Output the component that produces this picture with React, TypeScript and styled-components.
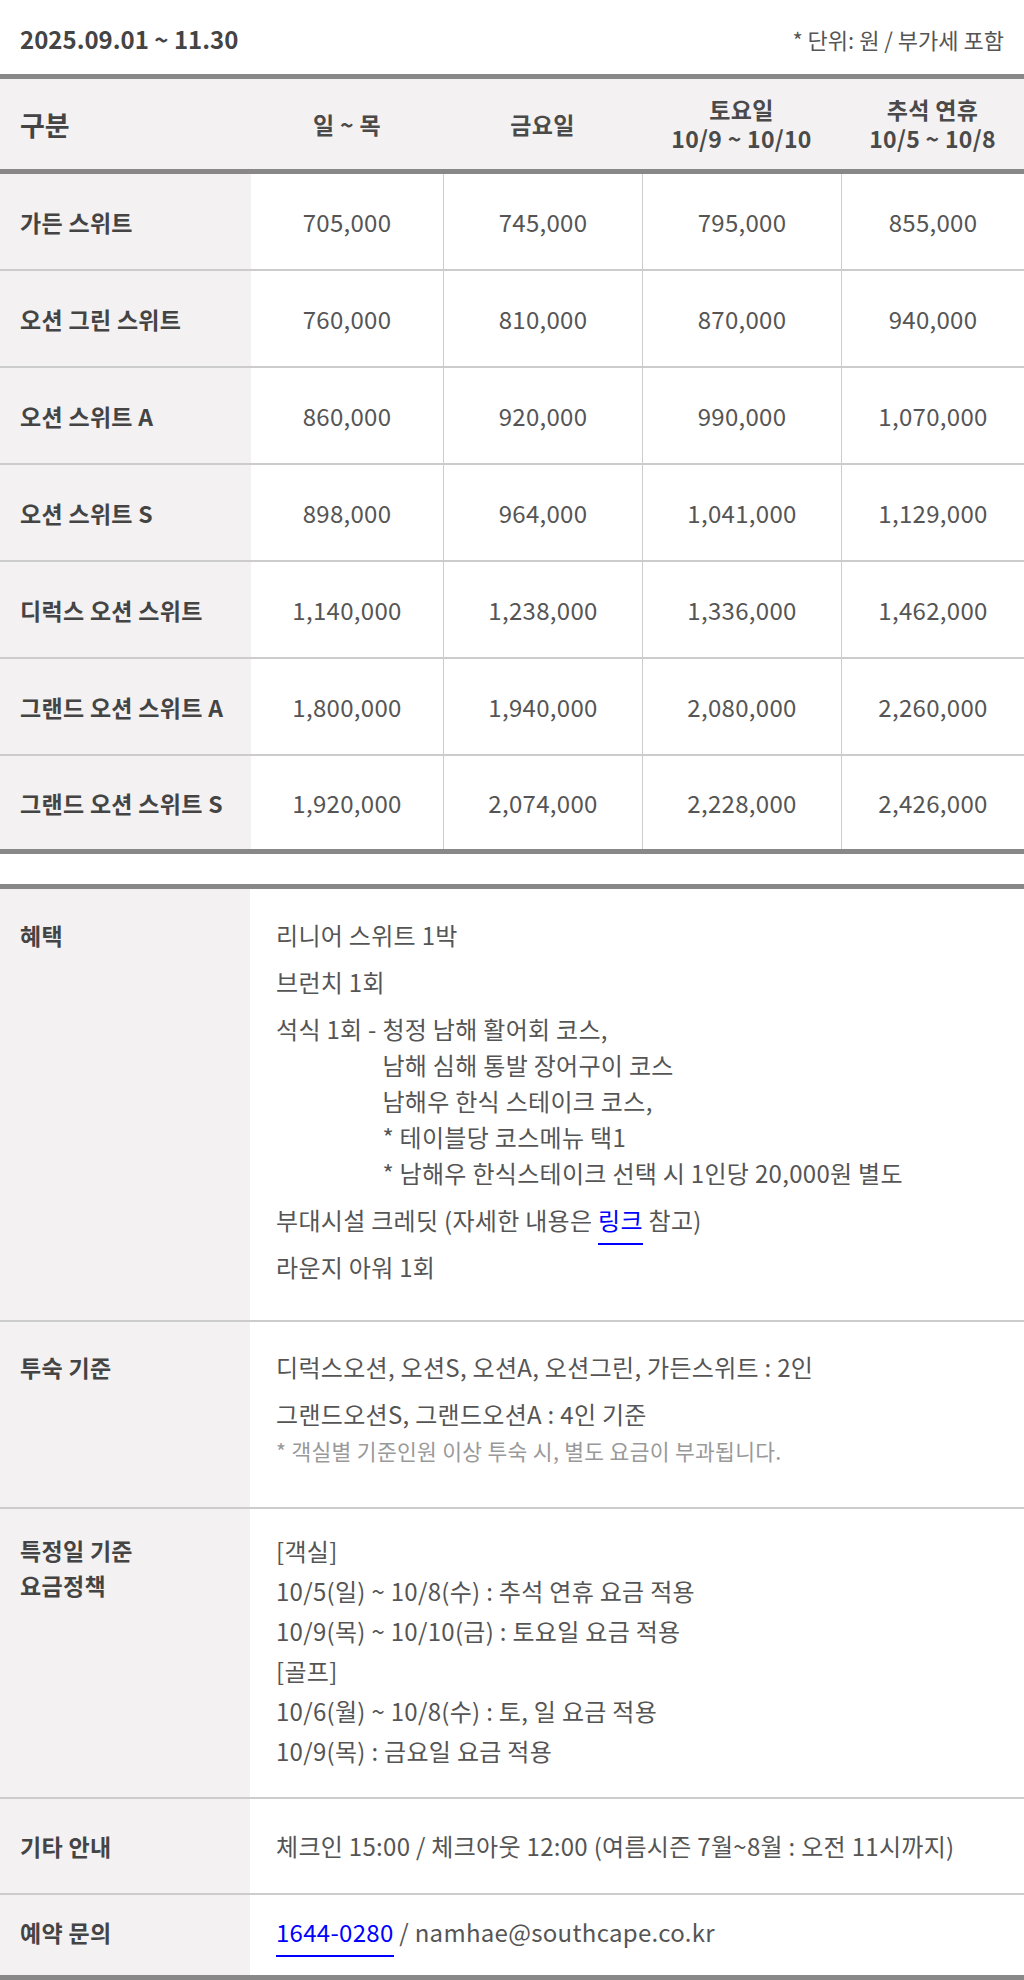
import styled, { createGlobalStyle } from 'styled-components';

const GlobalStyle = createGlobalStyle`
  body {
    margin: 0;
    background: #fff;
    font-family: 'Noto Sans CJK KR', 'Noto Sans', sans-serif;
    color: #555;
  }
  * {
    box-sizing: border-box;
  }
`;

const rooms = [
  ['가든 스위트', '705,000', '745,000', '795,000', '855,000'],
  ['오션 그린 스위트', '760,000', '810,000', '870,000', '940,000'],
  ['오션 스위트 A', '860,000', '920,000', '990,000', '1,070,000'],
  ['오션 스위트 S', '898,000', '964,000', '1,041,000', '1,129,000'],
  ['디럭스 오션 스위트', '1,140,000', '1,238,000', '1,336,000', '1,462,000'],
  ['그랜드 오션 스위트 A', '1,800,000', '1,940,000', '2,080,000', '2,260,000'],
  ['그랜드 오션 스위트 S', '1,920,000', '2,074,000', '2,228,000', '2,426,000'],
];

const App = () => {
  return (
    <Wrapper>
      <GlobalStyle />
      <TopBar>
        <Period>2025.09.01 ~ 11.30</Period>
        <Unit>* 단위: 원 / 부가세 포함</Unit>
      </TopBar>

      <PriceTable>
        <HeadRow>
          <HeadLabel>구분</HeadLabel>
          <HeadCell>일 ~ 목</HeadCell>
          <HeadCell>금요일</HeadCell>
          <HeadCell>
            <span>토요일</span>
            <span>10/9 ~ 10/10</span>
          </HeadCell>
          <HeadCell>
            <span>추석 연휴</span>
            <span>10/5 ~ 10/8</span>
          </HeadCell>
        </HeadRow>
        {rooms.map(([name, ...prices]) => (
          <PriceRow key={name}>
            <RoomName>{name}</RoomName>
            {prices.map((price, i) => (
              <Price key={i} $divider={i > 0}>
                {price}
              </Price>
            ))}
          </PriceRow>
        ))}
      </PriceTable>

      <InfoTable>
        <InfoRow $pt={28} $pb={35}>
          <InfoLabel>혜택</InfoLabel>
          <InfoBody $gap={11}>
            <Line>리니어 스위트 1박</Line>
            <Line>브런치 1회</Line>
            <Course>
              <CoursePrefix>석식 1회 - </CoursePrefix>
              <CourseList>
                <Line>청정 남해 활어회 코스,</Line>
                <Line>남해 심해 통발 장어구이 코스</Line>
                <Line>남해우 한식 스테이크 코스,</Line>
                <Line>* 테이블당 코스메뉴 택1</Line>
                <Line>* 남해우 한식스테이크 선택 시 1인당 20,000원 별도</Line>
              </CourseList>
            </Course>
            <Line>
              부대시설 크레딧 (자세한 내용은 <Link href="#">링크</Link> 참고)
            </Line>
            <Line>라운지 아워 1회</Line>
          </InfoBody>
        </InfoRow>

        <InfoRow $pt={27} $pb={37}>
          <InfoLabel>투숙 기준</InfoLabel>
          <InfoBody $gap={11}>
            <Line>디럭스오션, 오션S, 오션A, 오션그린, 가든스위트 : 2인</Line>
            <div>
              <Line>그랜드오션S, 그랜드오션A : 4인 기준</Line>
              <Note>* 객실별 기준인원 이상 투숙 시, 별도 요금이 부과됩니다.</Note>
            </div>
          </InfoBody>
        </InfoRow>

        <InfoRow $pt={22} $pb={26}>
          <InfoLabel $lh={35} $shift={2}>
            특정일 기준
            <br />
            요금정책
          </InfoLabel>
          <InfoBody $lh={40}>
            <Line>[객실]</Line>
            <Line>10/5(일) ~ 10/8(수) : 추석 연휴 요금 적용</Line>
            <Line>10/9(목) ~ 10/10(금) : 토요일 요금 적용</Line>
            <Line>[골프]</Line>
            <Line>10/6(월) ~ 10/8(수) : 토, 일 요금 적용</Line>
            <Line>10/9(목) : 금요일 요금 적용</Line>
          </InfoBody>
        </InfoRow>

        <InfoRow $pt={29} $pb={29}>
          <InfoLabel>기타 안내</InfoLabel>
          <InfoBody>
            <Line>체크인 15:00 / 체크아웃 12:00 (여름시즌 7월~8월 : 오전 11시까지)</Line>
          </InfoBody>
        </InfoRow>

        <InfoRow $pt={19} $pb={25}>
          <InfoLabel>예약 문의</InfoLabel>
          <InfoBody>
            <Line>
              <Link href="#">1644-0280</Link> / namhae@southcape.co.kr
            </Line>
          </InfoBody>
        </InfoRow>
      </InfoTable>
    </Wrapper>
  );
};

const Wrapper = styled.div`
  width: 1024px;
  background: #fff;
`;

const TopBar = styled.div`
  display: flex;
  justify-content: space-between;
  align-items: center;
  height: 74px;
  padding: 3px 20px 0 20px;
`;

const Period = styled.div`
  font-size: 24px;
  font-weight: 700;
  color: #444;
  line-height: 32px;
`;

const Unit = styled.div`
  font-size: 22px;
  color: #555;
  line-height: 32px;
`;

const PriceTable = styled.div`
  border-top: 5px solid #888;
  border-bottom: 5px solid #888;
`;

const columns = '251px 192px 199px 199px 1fr';

const HeadRow = styled.div`
  display: grid;
  grid-template-columns: ${columns};
  height: 90px;
  background: #f3f1f2;
  border-bottom: 5px solid #888;
  box-sizing: content-box;
`;

const HeadLabel = styled.div`
  display: flex;
  align-items: center;
  padding-left: 20px;
  font-size: 27px;
  font-weight: 700;
  color: #444;
`;

const HeadCell = styled.div`
  display: flex;
  flex-direction: column;
  align-items: center;
  justify-content: center;
  text-align: center;
  font-size: 23px;
  letter-spacing: 0.3px;
  line-height: 29px;
  font-weight: 700;
  color: #4a4a4a;

  span {
    display: block;
    height: 29px;
  }
`;

const PriceRow = styled.div`
  display: grid;
  grid-template-columns: ${columns};
  height: 97px;
  border-bottom: 2px solid #ccc;

  &:last-child {
    height: 93px;
    border-bottom: 0;
  }
`;

const RoomName = styled.div`
  display: flex;
  align-items: center;
  padding-left: 20px;
  background: #f3f1f2;
  font-size: 23px;
  letter-spacing: 0.3px;
  font-weight: 700;
  color: #444;
  white-space: nowrap;
`;

const Price = styled.div<{ $divider: boolean }>`
  display: flex;
  align-items: center;
  justify-content: center;
  font-size: 24px;
  letter-spacing: 0.3px;
  color: #555;
  border-left: ${({ $divider }) => ($divider ? '1px solid #ccc' : '0')};
`;

const InfoTable = styled.div`
  margin-top: 30px;
  border-top: 5px solid #888;
  border-bottom: 5px solid #888;
`;

const InfoRow = styled.div<{ $pt: number; $pb: number }>`
  --pt: ${({ $pt }) => $pt}px;
  --pb: ${({ $pb }) => $pb}px;
  display: grid;
  grid-template-columns: 250px 1fr;
  border-bottom: 2px solid #ccc;

  &:last-child {
    border-bottom: 0;
  }
`;

const InfoLabel = styled.div<{ $lh?: number; $shift?: number }>`
  background: #f3f1f2;
  padding: calc(var(--pt) + ${({ $shift }) => $shift || 0}px) 20px var(--pb);
  font-size: 23px;
  letter-spacing: 0.3px;
  line-height: ${({ $lh }) => $lh || 36}px;
  font-weight: 700;
  color: #444;
`;

const InfoBody = styled.div<{ $gap?: number; $lh?: number }>`
  display: flex;
  flex-direction: column;
  gap: ${({ $gap }) => $gap || 0}px;
  padding: var(--pt) 20px var(--pb) 26px;
  font-size: 24px;
  letter-spacing: 0.3px;
  line-height: ${({ $lh }) => $lh || 36}px;
  color: #555;
`;

const Line = styled.p`
  margin: 0;
`;

const Course = styled.div`
  display: flex;
`;

const CoursePrefix = styled.span`
  white-space: pre;
`;

const CourseList = styled.div`
  display: flex;
  flex-direction: column;
`;

const Note = styled.p`
  margin: 0;
  font-size: 21.5px;
  line-height: 38px;
  color: #999;
`;

const Link = styled.a`
  color: #0000ff;
  text-decoration: none;
  padding-bottom: 6px;
  border-bottom: 2px solid #0000ff;
`;

export default App;
